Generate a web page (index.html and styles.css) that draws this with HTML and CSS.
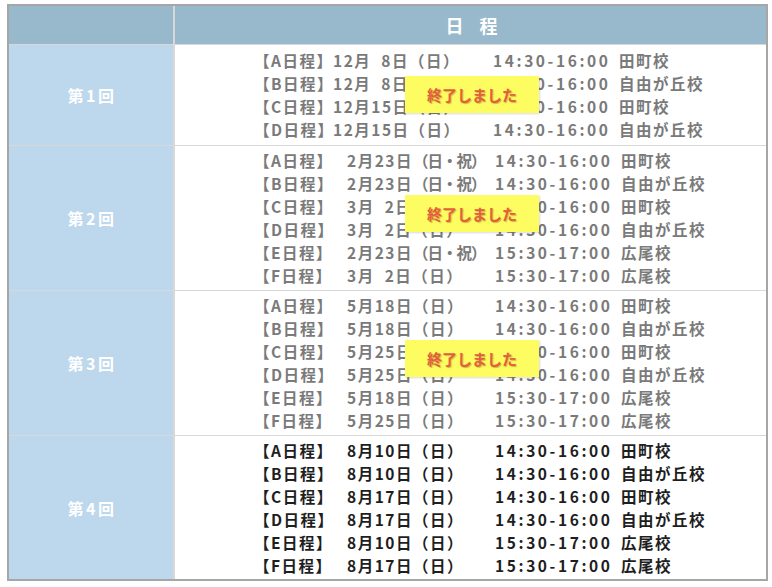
FILE: index.html
```html
<!DOCTYPE html>
<html lang="ja">
<head>
<meta charset="utf-8">
<title>日程</title>
<link rel="stylesheet" href="styles.css">
</head>
<body>
<div class="schedule">
  <div class="head head--blank"></div>
  <div class="head">日 程</div>

  <div class="round">第1回</div>
  <div class="slots slots--done slots--first">
    <ul class="lines">
      <li class="line"><span class="lab">【A日程】</span><span class="date">12月<span class="pad"></span>8日（日）</span><span class="time">14:30-16:00</span><span class="venue">田町校</span></li>
      <li class="line"><span class="lab">【B日程】</span><span class="date">12月<span class="pad"></span>8日（日）</span><span class="time">14:30-16:00</span><span class="venue">自由が丘校</span></li>
      <li class="line"><span class="lab">【C日程】</span><span class="date">12月15日（日）</span><span class="time">14:30-16:00</span><span class="venue">田町校</span></li>
      <li class="line"><span class="lab">【D日程】</span><span class="date">12月15日（日）</span><span class="time">14:30-16:00</span><span class="venue">自由が丘校</span></li>
    </ul>
    <div class="badge">終了しました</div>
  </div>

  <div class="round">第2回</div>
  <div class="slots slots--done slots--six">
    <ul class="lines">
      <li class="line"><span class="lab">【A日程】</span><span class="date">2月23日<span class="tight">（日・祝）</span></span><span class="time">14:30-16:00</span><span class="venue">田町校</span></li>
      <li class="line"><span class="lab">【B日程】</span><span class="date">2月23日<span class="tight">（日・祝）</span></span><span class="time">14:30-16:00</span><span class="venue">自由が丘校</span></li>
      <li class="line"><span class="lab">【C日程】</span><span class="date">3月<span class="pad"></span>2日（日）</span><span class="time">14:30-16:00</span><span class="venue">田町校</span></li>
      <li class="line"><span class="lab">【D日程】</span><span class="date">3月<span class="pad"></span>2日（日）</span><span class="time">14:30-16:00</span><span class="venue">自由が丘校</span></li>
      <li class="line"><span class="lab">【E日程】</span><span class="date">2月23日<span class="tight">（日・祝）</span></span><span class="time">15:30-17:00</span><span class="venue">広尾校</span></li>
      <li class="line"><span class="lab">【F日程】</span><span class="date">3月<span class="pad"></span>2日（日）</span><span class="time">15:30-17:00</span><span class="venue">広尾校</span></li>
    </ul>
    <div class="badge">終了しました</div>
  </div>

  <div class="round">第3回</div>
  <div class="slots slots--done slots--six">
    <ul class="lines">
      <li class="line"><span class="lab">【A日程】</span><span class="date">5月18日（日）</span><span class="time">14:30-16:00</span><span class="venue">田町校</span></li>
      <li class="line"><span class="lab">【B日程】</span><span class="date">5月18日（日）</span><span class="time">14:30-16:00</span><span class="venue">自由が丘校</span></li>
      <li class="line"><span class="lab">【C日程】</span><span class="date">5月25日（日）</span><span class="time">14:30-16:00</span><span class="venue">田町校</span></li>
      <li class="line"><span class="lab">【D日程】</span><span class="date">5月25日（日）</span><span class="time">14:30-16:00</span><span class="venue">自由が丘校</span></li>
      <li class="line"><span class="lab">【E日程】</span><span class="date">5月18日（日）</span><span class="time">15:30-17:00</span><span class="venue">広尾校</span></li>
      <li class="line"><span class="lab">【F日程】</span><span class="date">5月25日（日）</span><span class="time">15:30-17:00</span><span class="venue">広尾校</span></li>
    </ul>
    <div class="badge">終了しました</div>
  </div>

  <div class="round">第4回</div>
  <div class="slots slots--open">
    <ul class="lines">
      <li class="line"><span class="lab">【A日程】</span><span class="date">8月10日（日）</span><span class="time">14:30-16:00</span><span class="venue">田町校</span></li>
      <li class="line"><span class="lab">【B日程】</span><span class="date">8月10日（日）</span><span class="time">14:30-16:00</span><span class="venue">自由が丘校</span></li>
      <li class="line"><span class="lab">【C日程】</span><span class="date">8月17日（日）</span><span class="time">14:30-16:00</span><span class="venue">田町校</span></li>
      <li class="line"><span class="lab">【D日程】</span><span class="date">8月17日（日）</span><span class="time">14:30-16:00</span><span class="venue">自由が丘校</span></li>
      <li class="line"><span class="lab">【E日程】</span><span class="date">8月10日（日）</span><span class="time">15:30-17:00</span><span class="venue">広尾校</span></li>
      <li class="line"><span class="lab">【F日程】</span><span class="date">8月17日（日）</span><span class="time">15:30-17:00</span><span class="venue">広尾校</span></li>
    </ul>
  </div>
</div>
</body>
</html>
```

FILE: styles.css
```css
* { box-sizing: border-box; }

html, body { background: #ffffff; }

body {
  margin: 0;
  padding: 4px 0 0 7px;
  font-family: "Noto Sans CJK JP", "Noto Sans", sans-serif;
}

.schedule {
  width: 761px;
  display: grid;
  grid-template-columns: 164px 591px;
  grid-template-rows: 38px 100px 144px 144px 143px;
  column-gap: 2px;
  row-gap: 1px;
  background: #d8d8d8;
  border: 2px solid #a6a6a6;
}

.head {
  background: #98b9cc;
  color: #ffffff;
  font-weight: 700;
  font-size: 18px;
  letter-spacing: 6px;
  display: flex;
  align-items: center;
  justify-content: center;
  padding-left: 8px;
}

.round {
  background: #bdd7ec;
  color: #ffffff;
  font-weight: 700;
  font-size: 16px;
  letter-spacing: 2.5px;
  display: flex;
  align-items: center;
  justify-content: center;
  padding-left: 2px;
}

.slots {
  position: relative;
  background: #ffffff;
  display: flex;
  align-items: center;
}

.lines {
  list-style: none;
  margin: 0;
  padding: 0 0 0 79px;
  font-size: 15.5px;
  line-height: 23px;
  font-weight: 700;
}

.slots--done .lines { color: #7a7a7a; }
.slots--open .lines { color: #1e1e1e; }

.line {
  display: grid;
  grid-template-columns: 93px 148px 126px auto;
  white-space: nowrap;
  letter-spacing: 1.5px;
}

.slots--first .line {
  grid-template-columns: 79px 160px 126px auto;
}

.time { letter-spacing: 2.6px; }

.tight { letter-spacing: -1px; }

.pad {
  display: inline-block;
  width: 10px;
}

.badge {
  position: absolute;
  left: 230px;
  top: 31px;
  width: 134px;
  height: 37px;
  background: #fdfd62;
  color: #e4603c;
  font-size: 15px;
  font-weight: 700;
  display: flex;
  align-items: center;
  justify-content: center;
  text-shadow: 1px 1px 1px rgba(120, 60, 0, 0.35);
  box-shadow: 1px 1px 2px rgba(0, 0, 0, 0.15);
}

.slots--six .badge { top: 49px; }
```
